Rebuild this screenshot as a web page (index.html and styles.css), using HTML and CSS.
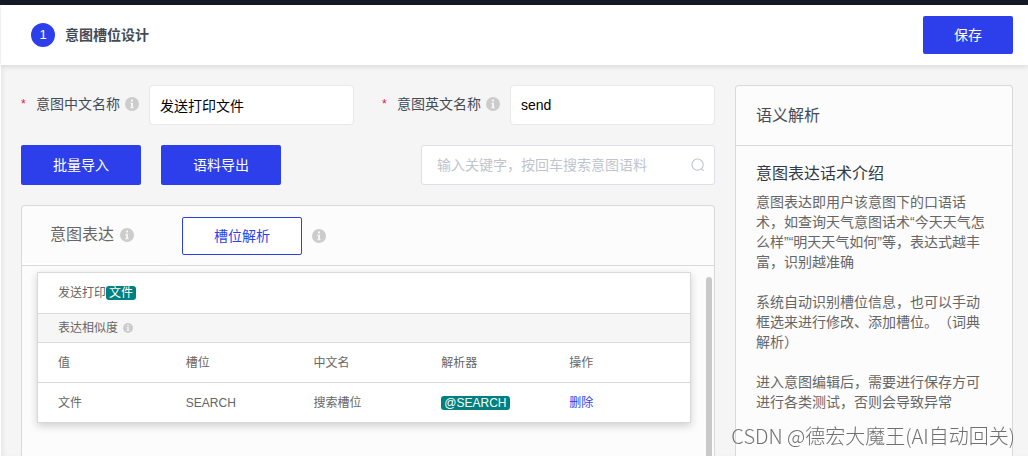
FILE: index.html
```html
<!DOCTYPE html>
<html lang="zh-CN">
<head>
<meta charset="utf-8">
<meta name="viewport" content="width=device-width, initial-scale=1">
<title>意图槽位设计</title>
<link rel="stylesheet" href="styles.css">
</head>
<body>
<svg class="sprite" aria-hidden="true">
  <symbol id="info" viewBox="0 0 14 14">
    <circle cx="7" cy="7" r="7" fill="#ccc"/>
    <path d="M6 2.6h2v1.9H6zM5.3 5.7H8v4.6h.8v1H5.2v-1H6V6.7h-.7z" fill="#f5f5f5"/>
  </symbol>
</svg>
<div class="topbar"></div>
<div class="shell">
  <header class="header">
    <span class="step">1</span>
    <h1 class="header-title">意图槽位设计</h1>
    <button class="btn btn-save" type="button">保存</button>
  </header>
  <div class="content">
    <main class="main">
      <form class="fields">
        <div class="field">
          <label class="label" for="name-zh"><span class="star">*</span>意图中文名称<svg class="info"><use href="#info"/></svg></label>
          <input class="input" id="name-zh" type="text" value="发送打印文件">
        </div>
        <div class="field">
          <label class="label" for="name-en"><span class="star">*</span>意图英文名称<svg class="info"><use href="#info"/></svg></label>
          <input class="input" id="name-en" type="text" value="send">
        </div>
      </form>
      <div class="toolbar">
        <button class="btn" type="button">批量导入</button>
        <button class="btn" type="button">语料导出</button>
        <div class="search">
          <input class="search-input" type="text" aria-label="搜索意图语料" placeholder="输入关键字，按回车搜索意图语料">
          <svg class="search-icon" viewBox="0 0 14 14"><circle cx="6.6" cy="6.6" r="5.6"/><path d="M10.6 10.8l2 2"/></svg>
        </div>
      </div>
      <section class="panel">
        <div class="panel-head">
          <h2 class="tab">意图表达<svg class="info"><use href="#info"/></svg></h2>
          <button class="btn-outline" type="button">槽位解析</button>
          <svg class="info"><use href="#info"/></svg>
        </div>
        <div class="panel-body">
          <article class="card">
            <p class="phrase">发送打印<mark class="tag">文件</mark></p>
            <p class="similar">表达相似度<svg class="info info-small"><use href="#info"/></svg></p>
            <table class="slots">
              <thead>
                <tr><th>值</th><th>槽位</th><th>中文名</th><th>解析器</th><th>操作</th></tr>
              </thead>
              <tbody>
                <tr><td>文件</td><td>SEARCH</td><td>搜索槽位</td><td><span class="tag">@SEARCH</span></td><td><a class="link" href="#">删除</a></td></tr>
              </tbody>
            </table>
          </article>
          <div class="scroll"><div class="thumb"></div></div>
        </div>
      </section>
    </main>
    <aside class="aside">
      <h2 class="aside-head">语义解析</h2>
      <div class="aside-body">
        <h3 class="aside-title">意图表达话术介绍</h3>
        <p class="para">意图表达即用户该意图下的口语话术，如查询天气意图话术“今天天气怎么样”“明天天气如何”等，表达式越丰富，识别越准确</p>
        <p class="para">系统自动识别槽位信息，也可以手动框选来进行修改、添加槽位。（词典解析）</p>
        <p class="para">进入意图编辑后，需要进行保存方可进行各类测试，否则会导致异常</p>
      </div>
    </aside>
  </div>
</div>
<div class="watermark">CSDN @德宏大魔王(AI自动回关)</div>
</body>
</html>
```
FILE: styles.css
```css
* { box-sizing: border-box; }

body {
  margin: 0;
  height: 100vh;
  overflow: hidden;
  display: flex;
  flex-direction: column;
  background: #fff;
  color: #666;
  font: 14px/20px "Liberation Sans", "Noto Sans CJK SC", sans-serif;
  text-spacing-trim: space-all;
}

h1, h2, h3, p { margin: 0; font-weight: 400; }
button, input { font: inherit; }

.sprite { position: absolute; width: 0; height: 0; }
.info { flex: none; width: 14px; height: 14px; }
.info-small { width: 10px; height: 10px; }

.topbar { flex: none; height: 5px; background: #141a26; }

.shell {
  flex: 1;
  min-height: 0;
  margin-left: 1px;
  display: flex;
  flex-direction: column;
  background: #f5f5f5;
  box-shadow: inset 4px 0 4px -2px #e6e6e6;
}

.header {
  flex: none;
  height: 60px;
  display: flex;
  align-items: center;
  padding: 0 15px 0 30px;
  background: #fff;
  box-shadow: 0 1px 6px rgba(0, 0, 0, .14);
}
.step {
  width: 24px;
  height: 24px;
  border-radius: 50%;
  background: #2d3fea;
  color: #fff;
  font-size: 13px;
  line-height: 24px;
  text-align: center;
}
.header-title {
  flex: 1;
  margin-left: 10px;
  color: #444b57;
  font-size: 14px;
  font-weight: 700;
}

.btn {
  flex: none;
  width: 120px;
  height: 40px;
  padding: 0;
  border: 0;
  border-radius: 2px;
  background: #2d3fea;
  color: #fff;
}
.btn-save { width: 90px; height: 38px; }

.content {
  flex: 1;
  min-height: 0;
  display: flex;
  gap: 20px;
  padding: 20px 15px 0 20px;
}
.main {
  flex: 1;
  min-width: 0;
  display: flex;
  flex-direction: column;
  gap: 20px;
}

.fields { display: flex; gap: 28px; }
.field { flex: 1; display: flex; min-width: 0; }
.label {
  flex: none;
  width: 128px;
  height: 38px;
  display: flex;
  align-items: center;
  color: #444b57;
}
.label .info { margin-left: 5px; }
.star { width: 15px; color: #f5104e; font-size: 12px; }
.input {
  flex: 1;
  min-width: 0;
  height: 40px;
  padding: 0 10px;
  border: 1px solid #e8e8e8;
  border-radius: 4px;
  background: #fff;
  color: #000;
}

.toolbar { display: flex; gap: 20px; }
.search {
  width: 294px;
  height: 40px;
  margin-left: auto;
  display: flex;
  align-items: center;
  padding: 0 9px 0 15px;
  border: 1px solid #dcdfe6;
  border-radius: 3px;
  background: #fff;
}
.search-input {
  flex: 1;
  min-width: 0;
  padding: 0;
  border: 0;
  outline: 0;
  background: none;
}
.search-input::placeholder { color: #c0c4cc; }
.search-icon {
  width: 14px;
  height: 14px;
  fill: none;
  stroke: #c0c4cc;
  stroke-width: 1.1;
}

.panel, .aside {
  border: 1px solid #d9d9d9;
  border-bottom: 0;
  border-radius: 4px 4px 0 0;
  background: #fcfcfc;
}
.panel {
  flex: 1;
  min-height: 0;
  display: flex;
  flex-direction: column;
}
.panel-head {
  flex: none;
  height: 60px;
  display: flex;
  align-items: center;
  border-bottom: 1px solid #d9d9d9;
}
.tab {
  width: 140px;
  height: 59px;
  display: flex;
  align-items: center;
  gap: 6px;
  padding-left: 28px;
  border-bottom: 2px solid #fff;
  font-size: 16px;
}
.btn-outline {
  width: 120px;
  height: 38px;
  margin: 0 10px 0 20px;
  padding: 0;
  border: 1px solid #2d3fea;
  border-radius: 2px;
  background: #fff;
  color: #2d3fea;
}
.panel-body {
  flex: 1;
  min-height: 0;
  display: flex;
  align-items: flex-start;
  gap: 15px;
  padding: 6px 0 0 15px;
}
.card {
  flex: 1;
  border: 1px solid #d9d9d9;
  background: #fff;
  box-shadow: 0 3px 8px rgba(0, 0, 0, .18);
  font-size: 12px;
}
.phrase { padding: 10px 20px; border-bottom: 1px solid #d9d9d9; }
.similar {
  display: flex;
  align-items: center;
  gap: 5px;
  padding: 4px 20px;
  border-bottom: 1px solid #d9d9d9;
  background: #f6f6f6;
}
.tag {
  display: inline-block;
  padding: 0 3px;
  border-radius: 3px;
  background: #008080;
  color: #fff;
  line-height: 14px;
}
.slots { width: 100%; table-layout: fixed; border-spacing: 0; }
.slots th, .slots td {
  padding: 0 0 0 20px;
  font-weight: 400;
  text-align: left;
}
.slots td { height: 39px; }
.slots th { height: 40px; border-bottom: 1px solid #d9d9d9; }
.slots th:not(:last-child) { width: 19.6%; }
.link { color: #2d3fea; text-decoration: none; }

.scroll { align-self: stretch; width: 8px; padding-top: 5px; }
.thumb {
  width: 6px;
  height: 100%;
  border-radius: 3px 3px 0 0;
  background: #c9c9c9;
}

.aside { flex: none; width: 278px; }
.aside-head {
  padding: 20px 20px 19px;
  border-bottom: 1px solid #d9d9d9;
  color: #444b57;
  font-size: 16px;
}
.aside-body { padding: 18px 20px; }
.aside-title { margin-bottom: 8px; color: #333a45; font-size: 16px; }
.para { margin-bottom: 20px; }

.watermark {
  position: fixed;
  right: 13px;
  bottom: 6px;
  color: #707070;
  font: 300 20px/28px "Noto Sans CJK SC", sans-serif;
  white-space: nowrap;
}
```
